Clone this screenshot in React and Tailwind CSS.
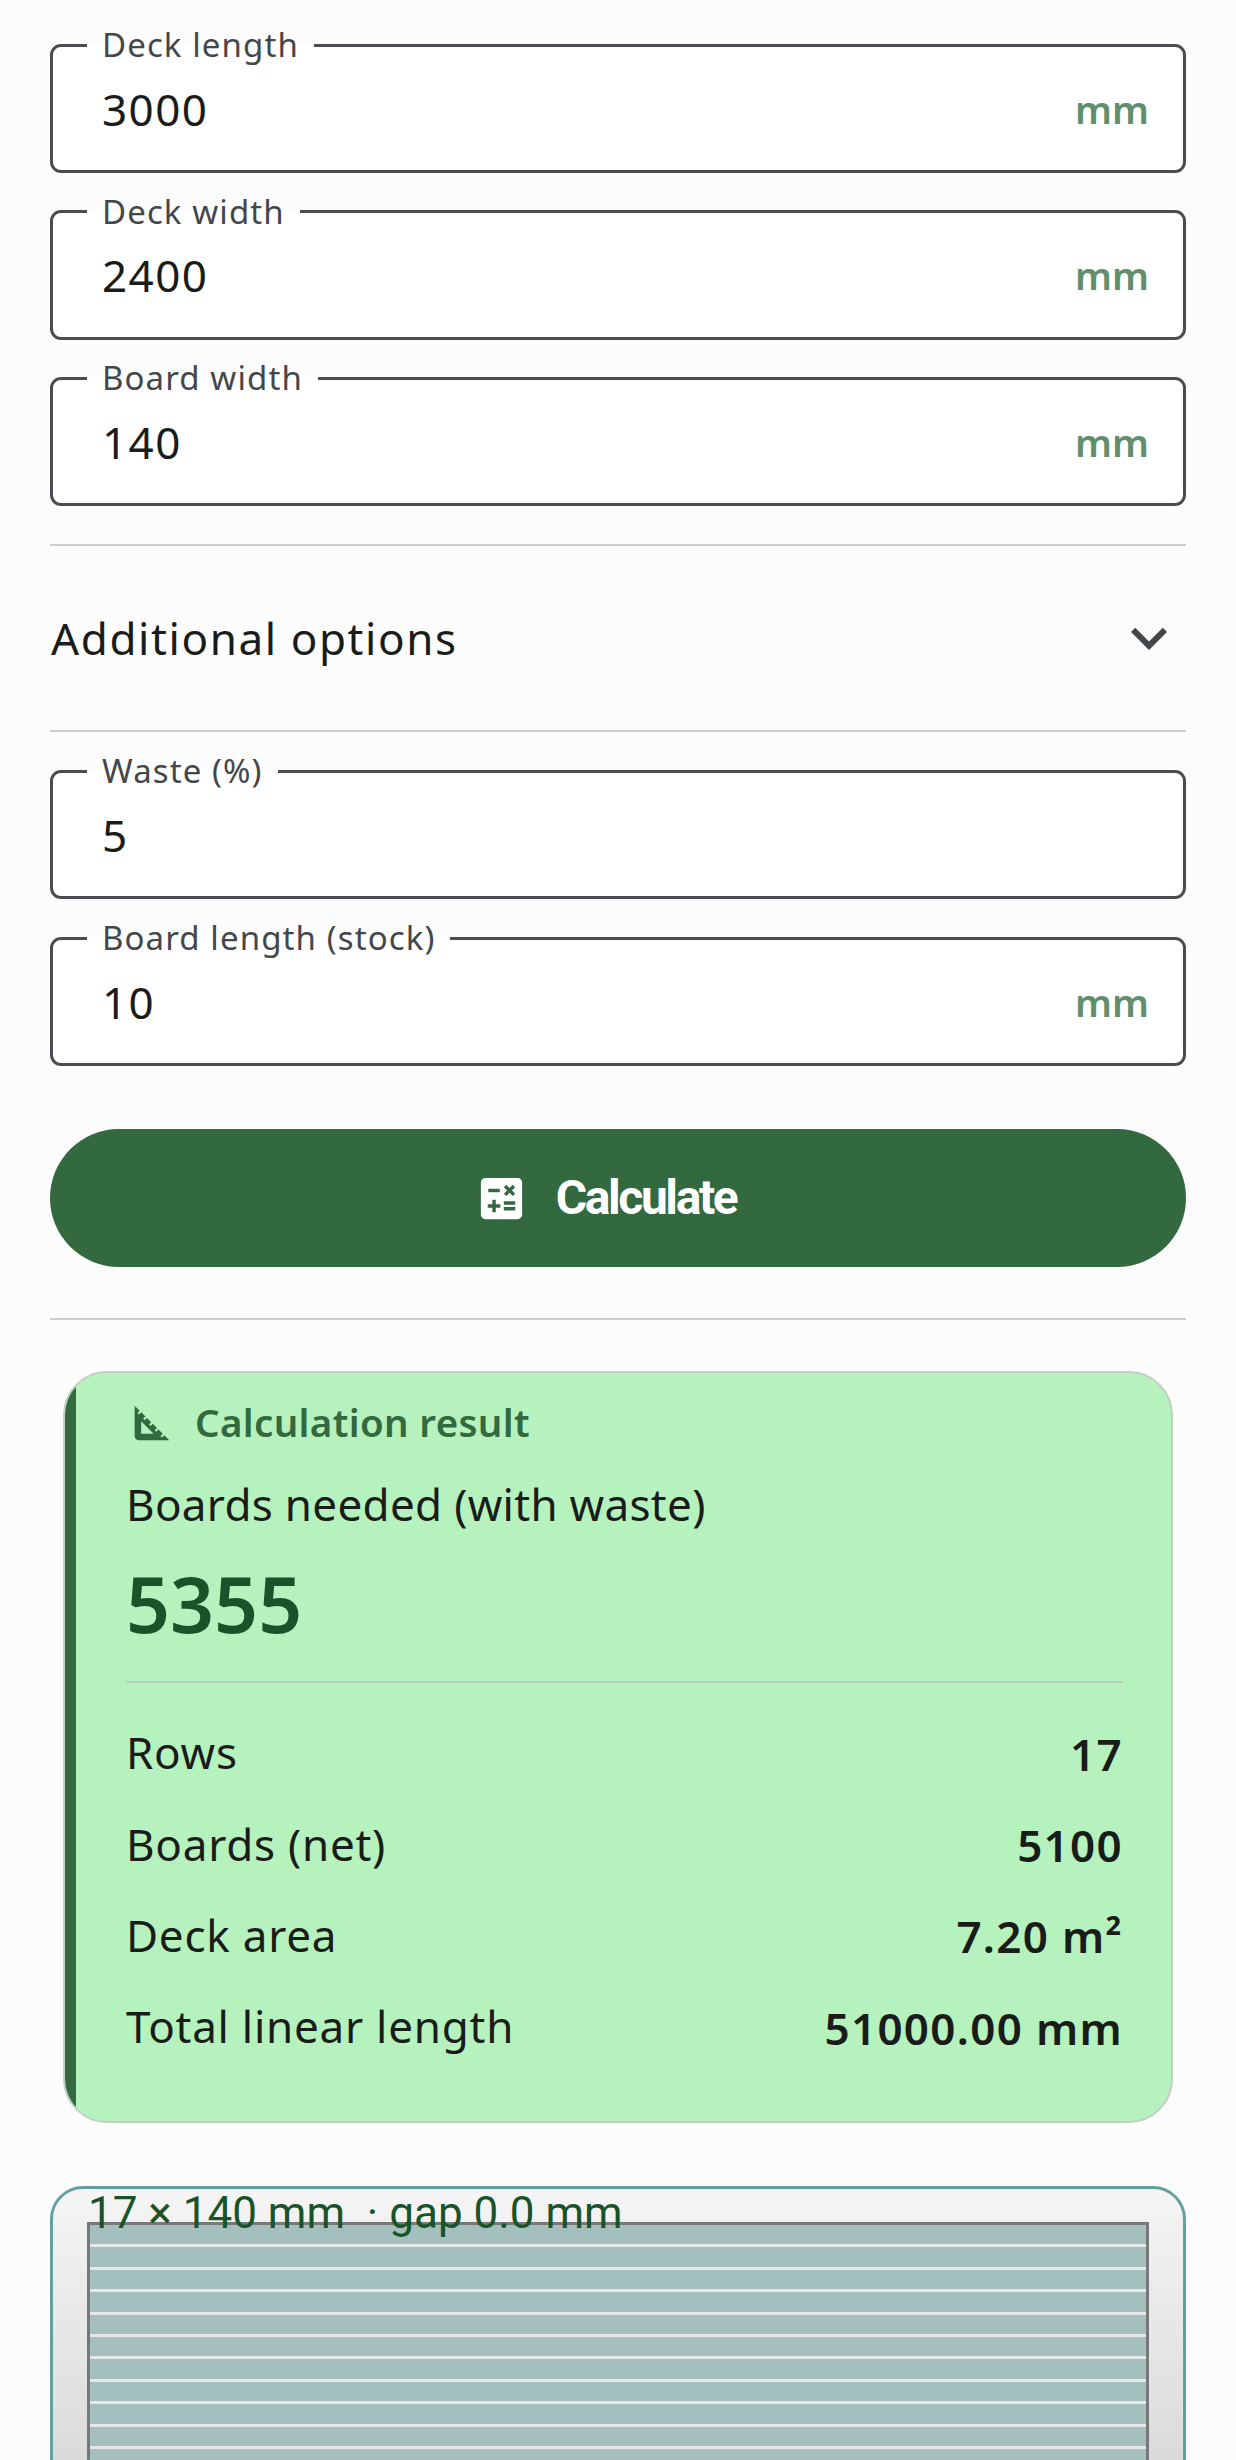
import React from "react";
import { MdCalculate, MdSquareFoot, MdKeyboardArrowDown } from "react-icons/md";

function Field({ label, value, unit }) {
  return (
    <fieldset className="block h-[150px] mb-[16.7px] rounded-[11px] border-[3px] border-[#4a4c4f] bg-white">
      <legend className="ml-[34px] px-[15px] text-[33px] leading-[44px] tracking-[1.1px] text-[#44474a]">{label}</legend>
      <div className="flex h-[83px] items-center justify-between pl-[49px] pr-[34px]">
        <span className="text-[44px] leading-[60px] tracking-[1.4px] text-[#1a1c1a]">{value}</span>
        {unit && <span className="text-[38.5px] font-semibold leading-[58px] text-[#618f6c]">{unit}</span>}
      </div>
    </fieldset>
  );
}

function Row({ label, value }) {
  return (
    <div className="flex h-[91.3px] items-center justify-between text-[44px] text-[#1a1c1a]">
      <span className="-mt-[3px] tracking-[0.75px]">{label}</span>
      <span className="font-semibold text-[44px] tracking-[1.3px]">{value}</span>
    </div>
  );
}

export default function App() {
  const boards = Array.from({ length: 17 }, (_, i) => i);
  return (
    <div className="h-[2460px] overflow-hidden bg-[#fcfcfc] px-[50px] pt-[23px] [font-family:'Noto_Sans',sans-serif]">
      <Field label="Deck length" value="3000" unit="mm" />
      <Field label="Deck width" value="2400" unit="mm" />
      <Field label="Board width" value="140" unit="mm" />

      <div className="mt-[38px] border-t-[2px] border-b-[2px] border-[#cdcdcd] h-[188px] flex items-center justify-between">
        <span className="pl-[1px] text-[44px] tracking-[1.6px] text-[#1a1c1a]">Additional options</span>
        <MdKeyboardArrowDown className="mr-[1px] h-[72px] w-[72px] text-[#44474a]" />
      </div>

      <div className="mt-[17px]">
        <Field label="Waste (%)" value="5" />
        <Field label="Board length (stock)" value="10" unit="mm" />
      </div>

      <button className="mt-[63px] flex h-[138px] w-full items-center justify-center rounded-[69px] bg-[#33693f] pr-[26px] text-white">
        <MdCalculate className="mr-[27px] h-[55px] w-[55px]" />
        <span className="text-[48px] font-bold tracking-[-2.4px] [font-family:Roboto,sans-serif]">Calculate</span>
      </button>

      <div className="mt-[51px] border-t-[2px] border-[#cdcdcd]" />

      <div className="relative mx-[13px] mt-[51px] h-[752px] overflow-hidden rounded-[44px] border-[2px] border-[#c2cfc2] bg-[#b5f2bd] pl-[61px] pr-[48px]">
        <div className="absolute bottom-0 left-0 top-0 w-[11px] bg-[#33693f]" />
        <div className="mt-[25px] flex h-[50px] items-center">
          <MdSquareFoot className="mr-[17px] h-[52px] w-[52px] text-[#33693f]" />
          <span className="text-[38.5px] font-semibold tracking-[0.35px] text-[#33693f]">Calculation result</span>
        </div>
        <div className="mt-[26px] text-[44px] leading-[60px] tracking-[0.3px] text-[#1a1c1a]">Boards needed (with waste)</div>
        <div className="mt-[17px] text-[77px] font-semibold leading-[105px] text-[#19532a]">5355</div>
        <div className="mt-[25px] border-t-[2px] border-[#c0cbc1]" />
        <div className="mt-[25px]">
          <Row label="Rows" value="17" />
          <Row label="Boards (net)" value="5100" />
          <Row label="Deck area" value="7.20 m²" />
          <Row label="Total linear length" value="51000.00 mm" />
        </div>
      </div>

      <div className="relative mt-[63px] h-[640px] rounded-[33px] border-[3px] border-[#64a0a0] bg-gradient-to-b from-[#f5f5f5] to-[#b8b8b8] px-[34px] pt-[33px]">
        <div className="border-[3px] border-[#777879] bg-[#a3c0bf]">
          {boards.map((i) => (
            <div key={i} className="h-[22.4px] border-b-[3px] border-[#e6e8e7]" />
          ))}
        </div>
        <div className="absolute left-[35px] top-[-2px] whitespace-pre text-[44px] leading-[52px] text-[#19532a] [font-family:Roboto,sans-serif]">17 × 140 mm  · gap 0.0 mm</div>
      </div>
    </div>
  );
}
